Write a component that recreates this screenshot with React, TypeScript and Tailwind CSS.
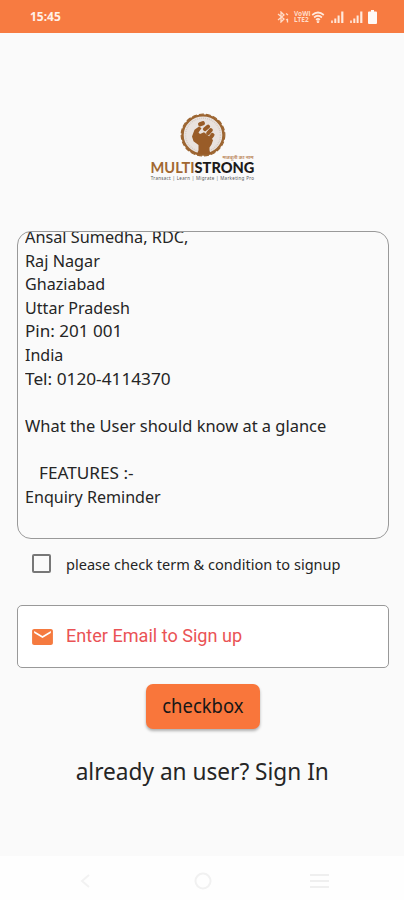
const terms = [
  { text: 'Ansal Sumedha, RDC,', fit: 'scale-x-[0.985]' },
  { text: 'Raj Nagar', fit: 'scale-x-[0.985]' },
  { text: 'Ghaziabad', fit: 'scale-x-[0.975]' },
  { text: 'Uttar Pradesh', fit: 'scale-x-[0.975]' },
  { text: 'Pin: 201 001', fit: 'scale-x-[1.035]' },
  { text: 'India', fit: 'scale-x-[0.97]' },
  { text: 'Tel: 0120-4114370', fit: 'scale-x-[1.045]' },
  { text: '', fit: '' },
  { text: 'What the User should know at a glance', fit: 'scale-x-[0.997]' },
  { text: '', fit: '' },
  { text: 'FEATURES :-', fit: 'ml-[14px] scale-x-[1.04]' },
  { text: 'Enquiry Reminder', fit: 'scale-x-[0.975]' },
];

function Signal() {
  return (
    <svg width="14" height="12" viewBox="0 0 14 12" fill="#ffe9dc">
      <rect x="0" y="9.5" width="2" height="2.5" opacity=".8" />
      <rect x="3.3" y="7.5" width="2" height="4.5" />
      <rect x="6.6" y="4.5" width="2" height="7.5" />
      <rect x="10.2" y="0.5" width="2.2" height="11.5" />
    </svg>
  );
}

function StatusBar() {
  return (
    <header className="flex h-[33px] items-center bg-[#f77b41] pl-[30px] pr-[27px] pt-[1px] text-[#fff1e8]">
      <span className="text-[12px] font-bold leading-none">15:45</span>
      <div className="ml-auto flex items-center">
        <svg width="13" height="12" viewBox="0 0 13 12" fill="none" stroke="#ffdcc8" strokeWidth="1.3">
          <path d="M1 3l6 5-3 3V1l3 3-6 5" />
          <path d="M9 2.5l2 1.500M9 9l2-1M10.500 8.500v3" />
        </svg>
        <div className="ml-[4px] w-[15px] whitespace-pre-line text-[6.5px] font-bold leading-[6px] text-[#ffdcc8]">{'VoWi\nLTE2'}</div>
        <svg className="ml-[2px]" width="14" height="12" viewBox="0 0 13 12" fill="none" stroke="#ffe9dc" strokeWidth="1.7">
          <path d="M.7 4Q6.5-1 12.3 4M2.600 6.500Q6.500 3 10.400 6.500M4.600 8.800Q6.500 7 8.400 8.800" />
          <circle cx="6.5" cy="10.7" r=".5" />
        </svg>
        <span className="ml-[6px]"><Signal /></span>
        <span className="ml-[5px]"><Signal /></span>
        <svg className="ml-[4px]" width="9" height="14" viewBox="0 0 9 14" fill="#fff9f5">
          <path d="M3 0h3v1.500h2a1 1 0 0 1 1 1V13a1 1 0 0 1-1 1H1a1 1 0 0 1-1-1V2.500a1 1 0 0 1 1-1h2z" />
        </svg>
      </div>
    </header>
  );
}

function Logo() {
  return (
    <div className="mt-[80px] flex h-[72px] w-[104px] flex-col items-center">
      <svg className="shrink-0" width="46" height="44" viewBox="0 0 46 46" preserveAspectRatio="none">
        <circle cx="23" cy="23" r="20.5" fill="#e9e2de" stroke="#9c6531" strokeWidth="2.4" />
        <circle cx="23" cy="23" r="21.800" fill="none" stroke="#9c6531" strokeWidth="1.200" strokeDasharray="5 2" />
        <circle cx="23" cy="23" r="17.500" fill="none" stroke="#d7cbc3" strokeWidth="1.500" strokeDasharray="1 1" />
        <g fill="#995c28">
          <path d="M12 24.500l2.500-7 4.500-3.500 2.500 2-3 4.500 1.500 1.500 4-2 3.500 3 4 3.500 1.500 2-1.500 4.500-2 3v3.500l1.500 3.500H17l1.500-4v-5.500l-5-4z" />
          <rect x="18" y="9" width="7" height="4.500" rx="2" transform="rotate(-20 21.500 11.200)" />
          <rect x="22.500" y="13.500" width="8" height="4" rx="1.800" transform="rotate(-40 26.500 15.500)" />
          <rect x="25.500" y="17.500" width="8" height="4" rx="1.800" transform="rotate(-50 29.500 19.500)" />
          <rect x="28.500" y="22" width="6.500" height="4" rx="1.800" transform="rotate(-55 31.700 24)" />
        </g>
      </svg>
      <div className="-mt-[2px] mr-px h-[5px] self-end whitespace-nowrap text-[5px] font-bold leading-[5px] text-[#bd8a61]">मजबूती का नाम</div>
      <div className="mt-px flex h-[13px] whitespace-nowrap font-['Lato'] text-[14.600px] leading-[13px]">
        <span className="font-bold text-[#a16832]">MULTI</span>
        <span className="font-black text-[#1d1b1b]">STRONG</span>
      </div>
      <div className="mt-px whitespace-nowrap text-[4.5px] leading-[6px] tracking-[0.3px] text-[#555]">Transact | Learn | Migrate | Marketing Pro</div>
    </div>
  );
}

export default function App() {
  return (
    <div className="flex h-[900px] w-[404px] flex-col bg-[#fafafa] font-['Noto_Sans',sans-serif] text-[#252525]">
      <StatusBar />
      <main className="flex h-[823px] flex-col items-center pl-px">
        <Logo />
        <section className="mt-[46px] h-[308px] w-[372px] overflow-hidden rounded-[14px] border border-[#999] pl-[7px]">
          <div className="-mt-[7px]">
            {terms.map((line, i) => (
              <p key={i} className="h-[23.6px] whitespace-pre text-[16.5px] leading-[23.6px]">
                <span className={`inline-block origin-left ${line.fit}`}>{line.text}</span>
              </p>
            ))}
          </div>
        </section>
        <label className="mt-[15px] flex h-[20px] w-[372px] items-center pl-[15px]">
          <span className="-mt-px size-[19px] rounded-[2px] border-2 border-[#777]" />
          <span className="ml-[15px] origin-left scale-x-[0.97] whitespace-nowrap text-[15px]">please check term &amp; condition to signup</span>
        </label>
        <div className="mt-[31px] flex h-[63px] w-[372px] items-center rounded-[5px] border border-[#999] bg-white pl-[12px]">
          <svg width="25" height="24" viewBox="0 0 24 24" fill="#f57a3f" preserveAspectRatio="none">
            <path d="M20 4H4c-1.100 0-1.990.9-1.990 2L2 18c0 1.100.9 2 2 2h16c1.100 0 2-.9 2-2V6c0-1.100-.9-2-2-2zm0 4l-8 5-8-5V6l8 5 8-5v2z" />
          </svg>
          <span className="-mt-[2px] ml-[11px] origin-left scale-x-[1.005] whitespace-nowrap font-['Roboto'] text-[18px] leading-[26px] text-[#ea5355]">Enter Email to Sign up</span>
        </div>
        <button className="mt-[16px] flex h-[45px] w-[114px] items-center justify-center rounded-[7px] bg-[#f9763b] text-[19px] text-[#171717] shadow-[0_2px_3px_rgba(0,0,0,0.3)]">
          <span className="scale-x-[0.97]">checkbox</span>
        </button>
        <p className="mt-[25px] scale-x-[0.943] whitespace-nowrap text-[24px] leading-[34px]">already an user? Sign In</p>
      </main>
      <nav className="flex flex-1 items-center bg-[#fefefe] pl-[78px] pt-[5px]">
        <svg width="14" height="16" viewBox="0 0 14 16" fill="none" stroke="#f2f2f2" strokeWidth="2"><path d="M11 2L4 8l7 6" /></svg>
        <svg className="ml-[101px]" width="20" height="20" viewBox="0 0 20 20" fill="none" stroke="#f1f1f1" strokeWidth="2"><circle cx="10" cy="10" r="7.500" /></svg>
        <svg className="ml-[97px]" width="19" height="16" viewBox="0 0 19 16" stroke="#efefef" strokeWidth="2"><path d="M0 2h19M0 8h19M0 14h19" /></svg>
      </nav>
    </div>
  );
}
